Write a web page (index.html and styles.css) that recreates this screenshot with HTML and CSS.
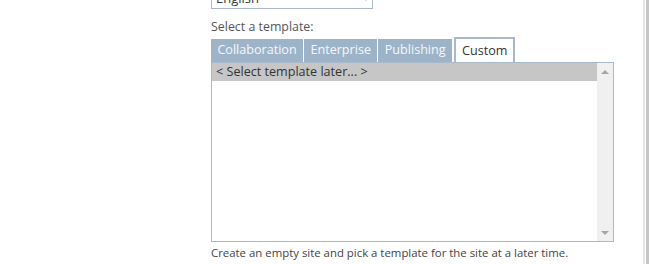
FILE: index.html
```html
<!DOCTYPE html>
<html lang="en">
<head>
  <meta charset="UTF-8">
  <title>Select a template</title>
  <link rel="stylesheet" href="styles.css">
</head>
<body>
  <div class="page">
    <div class="form">
      <!-- language picker, scrolled partly out of view -->
      <div class="lang-select">
        <span>English</span>
        <span class="caret">&#9662;</span>
      </div>

      <div class="label">Select a template:</div>

      <div class="tabs">
        <div class="tab">Collaboration</div>
        <div class="tab">Enterprise</div>
        <div class="tab">Publishing</div>
        <div class="tab active">Custom</div>
      </div>

      <div class="listbox">
        <div class="list-items">
          <div class="item selected">&lt; Select template later... &gt;</div>
        </div>
        <div class="scrollbar">
          <span class="arrow up"></span>
          <span class="arrow down"></span>
        </div>
      </div>

      <div class="description">Create an empty site and pick a template for the site at a later time.</div>
    </div>
    <div class="edge-light"></div>
    <div class="edge-dark"></div>
  </div>
</body>
</html>
```

FILE: styles.css
```css
* {
  box-sizing: border-box;
  margin: 0;
  padding: 0;
}
body {
  font-family: "Open Sans", "Noto Sans", sans-serif;
  font-size: 12px;
  color: #444;
  background: #fff;
  overflow: hidden;
}
.page {
  display: flex;
  height: 264px;
}
.form {
  flex: 1;
  padding-left: 211px;
}
/* language dropdown */
.lang-select {
  width: 162px;
  height: 23px;
  margin-top: -14px;
  border: 1px solid #a7b9cb;
  padding: 0 4px;
  display: flex;
  align-items: center;
  justify-content: space-between;
  color: #333;
  font-size: 13px;
}
.lang-select .caret {
  font-size: 8px;
  color: #999;
}
.label {
  margin-top: 10px;
  line-height: 16px;
  font-size: 12.4px;
  color: #555;
}
/* tabs */
.tabs {
  display: flex;
  align-items: flex-end;
  gap: 1px;
  margin-top: 1px;
  height: 26px;
}
.tab {
  height: 23px;
  line-height: 22px;
  padding: 0 6.4px;
  background: #9db4c8;
  color: #f4f7fa;
  font-size: 12.6px;
}
.tab.active {
  height: 25px;
  margin-left: 1px;
  background: #fff;
  color: #333;
  border: 2px solid #a7b9cb;
  border-bottom: none;
  line-height: 23px;
  padding: 0 6px;
}
/* template list */
.listbox {
  width: 403px;
  height: 180px;
  border: 1px solid #a7b9cb;
  display: flex;
}
.list-items {
  flex: 1;
}
.item {
  height: 18px;
  line-height: 18px;
  padding-left: 4px;
  color: #333;
  font-size: 12.6px;
}
.item.selected {
  background: #c6c6c6;
}
.scrollbar {
  width: 16px;
  background: #f0f0f0;
  display: flex;
  flex-direction: column;
  justify-content: space-between;
  align-items: center;
  padding: 7px 0 6px;
}
.arrow {
  width: 0;
  height: 0;
  border-left: 4px solid transparent;
  border-right: 4px solid transparent;
}
.arrow.up {
  border-bottom: 4px solid #a6a6a6;
}
.arrow.down {
  border-top: 4px solid #a6a6a6;
}
.description {
  margin-top: 3px;
  line-height: 16px;
  font-size: 11.4px;
  color: #444;
}
/* page edge on the right */
.edge-light {
  width: 2px;
  margin-right: 1px;
  background: #e6e6e6;
}
.edge-dark {
  width: 3px;
  background: #c6c6c6;
}
```
